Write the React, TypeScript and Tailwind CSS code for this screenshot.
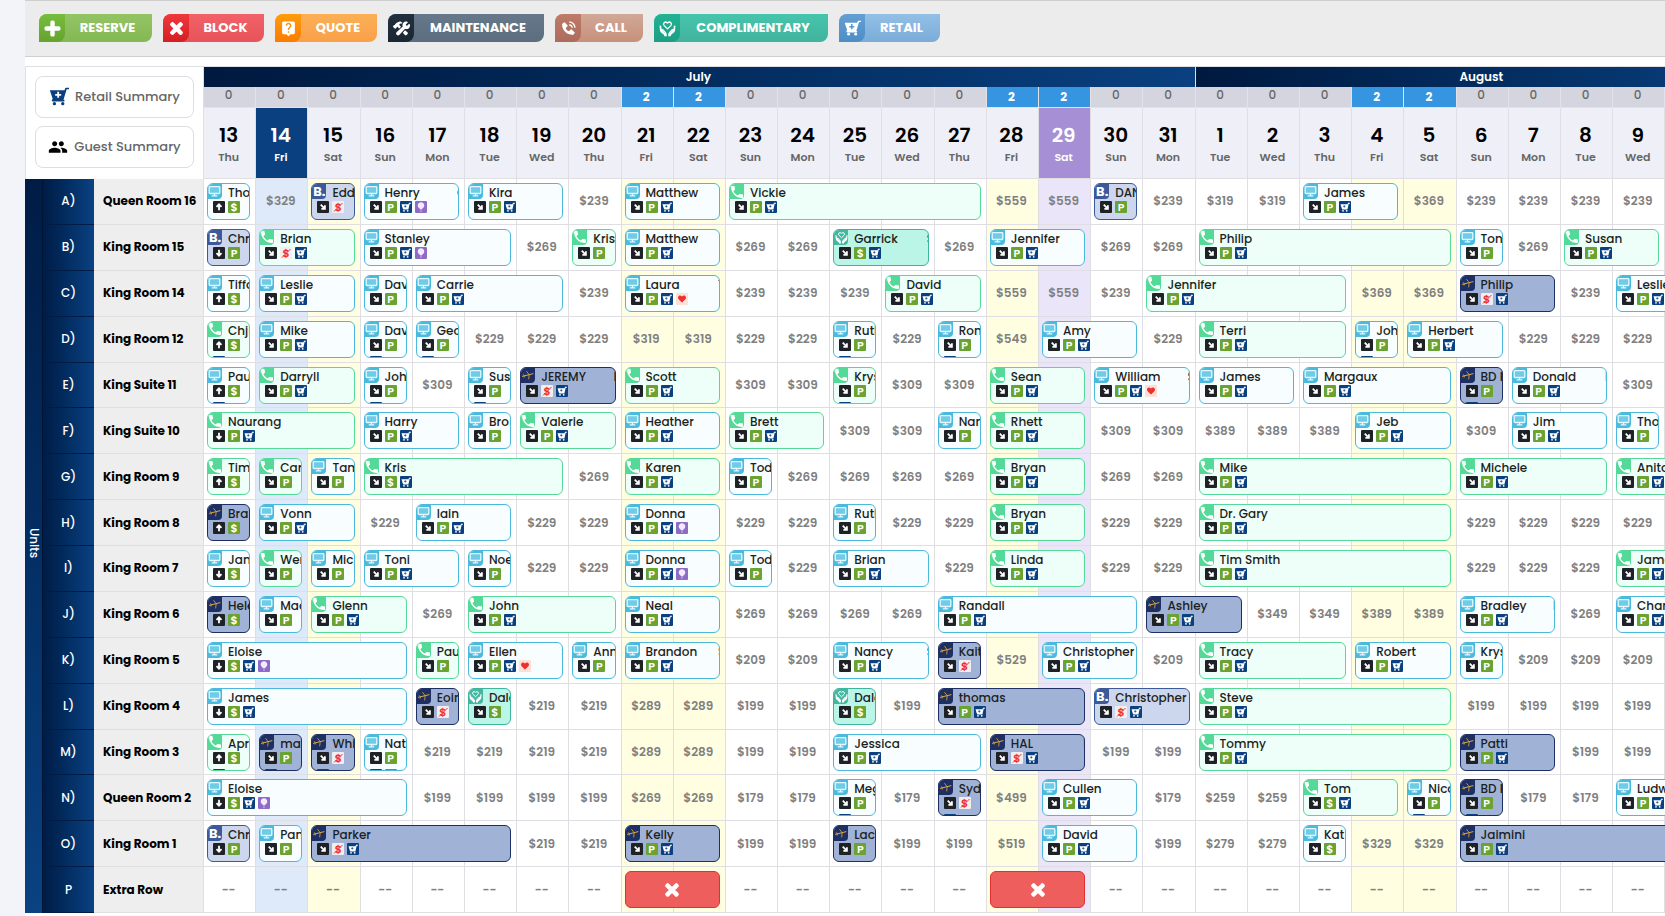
import type { ComponentType, ReactNode } from "react";
import { FaHeart, FaPlus, FaTimes } from "react-icons/fa";
import { IoConstruct } from "react-icons/io5";
import { MdLiveHelp, MdPeople, MdPhone } from "react-icons/md";
import { BiSolidPhoneCall } from "react-icons/bi";

type IconProps = { className?: string };

/* ---------- icons ---------- */

function CartIcon({ className }: IconProps) {
  return (
    <svg viewBox="0 0 24 24" className={className} fill="currentColor" aria-hidden="true">
      <path
        fillRule="evenodd"
        d="M1 4h17.600l.7-2.200c.2-.6.6-.9 1.200-.9H24v1.900h-2.800L17.400 15.400H18.500V17.500H4.500c-1 0-1.500-1-1-1.800l.9-1.500L1 4Zm8.900 1.800v2.500H7.400v2.200h2.500V13h2.200v-2.500h2.500V8.300h-2.500V5.800H9.900Z"
      />
      <circle cx="6.500" cy="20" r="2" />
      <circle cx="16.500" cy="20" r="2" />
    </svg>
  );
}

function SmallCartIcon({ className }: IconProps) {
  return (
    <svg viewBox="0 0 12 12" className={className} fill="currentColor" aria-hidden="true">
      <path d="M1.500 3.200h7l.5-1.400h1.900v.9H9.700L8.400 8.400H3.400L2.700 7.200Z" />
      <circle cx="4" cy="9.800" r="0.9" />
      <circle cx="7.700" cy="9.800" r="0.9" />
      <path d="M5.300 4.200v2.400M4.100 5.400h2.400" stroke="#0a4080" strokeWidth="0.7" />
    </svg>
  );
}

function CareIcon({ className }: IconProps) {
  return (
    <svg viewBox="0 0 24 24" className={className} fill="none" stroke="currentColor" aria-hidden="true">
      <path
        strokeWidth="1.800"
        strokeLinejoin="round"
        d="M12 12.500 7.300 7.900a2.900 2.900 0 0 1 4.100-4.100l.6.600.6-.6a2.900 2.900 0 0 1 4.100 4.100L12 12.500Z"
      />
      <path
        fill="currentColor"
        stroke="none"
        d="M.8 8.500c0-.9 2-.9 2.200.100l.7 4.400c1.200-.9 2.200-.300 3 .7l3 3.600c1 1.300 1.300 2.200 1.300 5.700H7.500c-.2-1.600-.8-2.500-2.300-3.500C2 17.500 1.400 16 1.200 13L.8 8.500ZM23.200 8.500c0-.9-2-.9-2.200.100l-.7 4.400c-1.200-.9-2.200-.300-3 .7l-3 3.600c-1 1.300-1.300 2.200-1.300 5.700h3.500c.2-1.600.8-2.500 2.300-3.500 3.200-2 3.800-3.500 4-6.500l.4-4.500Z"
      />
      <path strokeWidth="1" className="stroke-black/20" d="m5 14.500 3.500 4M19 14.500l-3.500 4" />
    </svg>
  );
}

function MonitorIcon({ className }: IconProps) {
  return (
    <svg viewBox="0 0 14 13" className={className} fill="none" stroke="#e6f8ff" aria-hidden="true">
      <rect x="1.200" y="1.700" width="10.600" height="6.800" rx="0.8" strokeWidth="1.300" fill="#6fcbe6" />
      <path d="M6.500 8.500v2M3.700 10.900h5.600" strokeWidth="1.300" />
    </svg>
  );
}

function PlaneIcon({ className }: IconProps) {
  return (
    <svg viewBox="0 0 14 13" className={className} fill="none" stroke="#e2aa3a" aria-hidden="true">
      <path d="M1.500 7.300 12 4.700" strokeWidth="1" strokeLinecap="round" />
      <path d="m5.700 2.500 2.500 3.200-.5 4.300M2.500 5.700l.9 1.300-.3 1.200" strokeWidth="0.8" strokeLinecap="round" />
    </svg>
  );
}

function ArrowIcon({ turn }: { turn: string }) {
  return (
    <svg viewBox="0 0 12 12" className={`size-3 ${turn}`} fill="none" stroke="#fff" strokeWidth="1.800" aria-hidden="true">
      <path d="M6 2.800V9M3.500 6.200 6 8.700l2.500-2.500" />
    </svg>
  );
}

function BalloonIcon() {
  return (
    <svg viewBox="0 0 12 12" className="size-3" fill="#f4eaff" aria-hidden="true">
      <path d="M6 1.300c2 0 3.300 1.500 3.300 3.200C9.300 6.200 7.600 7.600 6.300 8.300h-.6C4.400 7.600 2.700 6.200 2.700 4.500 2.700 2.800 4 1.300 6 1.300ZM5.700 8.300h.6V11h-.6Z" />
    </svg>
  );
}

/* ---------- toolbar ---------- */

const ACTIONS: { label: string; Icon: ComponentType<IconProps>; body: string; cap: string; width: string; glyph: string }[] = [
  { label: "RESERVE", Icon: FaPlus, glyph: "stroke-white stroke-[36]", width: "w-[113px]", body: "from-[#93c464] to-[#84b854]", cap: "from-[#76bd3d] to-[#65a32e]" },
  { label: "BLOCK", Icon: FaTimes, glyph: "stroke-white stroke-[36]", width: "w-[101px]", body: "from-[#f26168] to-[#e6545a]", cap: "from-[#f0383c] to-[#d51d22]" },
  { label: "QUOTE", Icon: MdLiveHelp, glyph: "", width: "w-[102px]", body: "from-[#fbb055] to-[#f9a049]", cap: "from-[#ff9c0c] to-[#fb7b00]" },
  { label: "MAINTENANCE", Icon: IoConstruct, glyph: "", width: "w-[156px]", body: "from-[#66788a] to-[#5c6d7f]", cap: "from-[#22303f] to-[#1a2632]" },
  { label: "CALL", Icon: BiSolidPhoneCall, glyph: "", width: "w-[88px]", body: "from-[#d1a897] to-[#c7907a]", cap: "from-[#bf7a68] to-[#ac6c5c]" },
  { label: "COMPLIMENTARY", Icon: CareIcon, glyph: "", width: "w-[174px]", body: "from-[#46c5ac] to-[#42b39d]", cap: "from-[#22b394] to-[#1c9f84]" },
  { label: "RETAIL", Icon: CartIcon, glyph: "", width: "w-[101px]", body: "from-[#93bfe5] to-[#7aacd8]", cap: "from-[#649fd3] to-[#4d8dc6]" },
];

function Toolbar() {
  return (
    <div className="flex gap-[11px] border-y border-[#cfcfcf] bg-[#ececec] pt-[13px] pb-[14px] pl-[14px]">
      {ACTIONS.map(({ label, Icon, body, cap, width, glyph }) => (
        <button
          key={label}
          type="button"
          className={`flex h-7 shrink-0 overflow-hidden rounded-tl-lg rounded-br-lg bg-linear-to-b text-[13px] font-bold text-white ${width} ${body}`}
        >
          <span className={`flex h-7 w-[26px] items-center justify-center rounded-br-lg bg-linear-to-b ${cap}`}>
            <Icon className={`size-[17px] ${glyph}`} />
          </span>
          <span className="flex h-7 flex-1 items-center justify-center pr-[2px]">{label}</span>
        </button>
      ))}
    </div>
  );
}

/* ---------- schedule data ---------- */

const DAY_NAMES = ["Thu", "Fri", "Sat", "Sun", "Mon", "Tue", "Wed"];
const DAYS = Array.from({ length: 30 }, (_, i) => ({
  date: i < 19 ? 13 + i : i - 18,
  name: DAY_NAMES[i % 7],
}));
const BUSY = [8, 9, 15, 16, 22, 23];
const TODAY = 1;
const HOLIDAY = 16;
const WEEKEND = [2, 8, 9, 15, 22, 23];

/*
 * Each row is a list of entries separated by "|".
 * A rate is "239" or "239*4"; a stay is "<source><nights>/<guest>/<marks>/<surname initial>".
 */
const UNITS: [string, string, string][] = [
  ["A)", "Queen Room 16", "w1/Tho/u$|329|k1/Edd/nx|w2/Henry/nPcb/C|w2/Kira/nPc|239|w2/Matthew/nPc|p5/Vickie/nPc|559*2|k1/DAN/nP|239|319*2|w2/James/nPc|369|239*4"],
  ["B)", "King Room 15", "k1/Chr/dP|p2/Brian/nxc|w3/Stanley/nPcb|269|p1/Kris/nP|w2/Matthew/nPc|269*2|g2/Garrick/n$c/S|269|w2/Jennifer/nPc|269*2|p5/Philip/nPc|w1/Ton/nP|269|p2/Susan/nPc"],
  ["C)", "King Room 14", "w1/Tiffa/u$|w2/Leslie/nPc|w1/Dav/nP|w3/Carrie/nPc|239|w2/Laura/nPch/T|239*3|p2/David/nPc|559*2|239|p4/Jennifer/nPc|369*2|e2/Philip/nxc|239|w2/Leslie/nPc"],
  ["D)", "King Room 12", "p1/Chji/u$c|w2/Mike/nPc|w1/Dav/nPc|w1/Geo/nPc|229*3|319*2|229*2|w1/Ruth/nPc|229|w1/Ron/nPc|549|w2/Amy/nPc|229|p3/Terri/nPc|w1/Joh/nPc|w2/Herbert/nPc|229*3"],
  ["E)", "King Suite 11", "w1/Pau/u$c|p2/Darryll/nPc|w1/Joh/nPc|309|w1/Sus/nPc|e2/JEREMY/nxc/B|p2/Scott/nPc|309*2|p1/Krys/nPc|309*2|p2/Sean/nPc|w2/William/nPch/S|w2/James/nPc|w3/Margaux/nPc|e1/BD F/nPc|w2/Donald/nPc/B|309"],
  ["F)", "King Suite 10", "p3/Naurang/dPc|w2/Harry/nPc|w1/Bro/nP|p2/Valerie/nPc|w2/Heather/nPc|p2/Brett/nPc|309*2|w1/Nan/nP|p2/Rhett/nPc|309*2|389*3|w2/Jeb/nPc|309|w2/Jim/nPc|w1/Tho/nP"],
  ["G)", "King Room 9", "p1/Tim/u$|p1/Car/nP|w1/Tam/nP|p4/Kris/n$c|269|p2/Karen/nPc|w1/Tod/nP|269*4|p2/Bryan/nPc|269*2|p5/Mike/nPc|p3/Michele/nPc|p2/Anita/nPc"],
  ["H)", "King Room 8", "e1/Bra/u$|w2/Vonn/nPc|229|w2/Iain/nPc|229*2|w2/Donna/nPcb|229*2|w1/Ruth/nP|229*2|p2/Bryan/nPc|229*2|p5/Dr. Gary/nPc|229*4"],
  ["I)", "King Room 7", "w1/Jan/d$|p1/Wen/nP|w1/Mic/nP|w2/Toni/nPc|w1/Noe/nP|229*2|w2/Donna/nPcb|w1/Tod/nP|229|w2/Brian/nPc|229|p2/Linda/nPc|229*2|p5/Tim Smith/nPc|229*3|p2/James/nPc"],
  ["J)", "King Room 6", "e1/Hele/u$|w1/Mac/nP|p2/Glenn/nPc|269|p3/John/nPc|w2/Neal/nPc|269*4|w4/Randall/nPc|e2/Ashley/nPc|349*2|389*2|w2/Bradley/nPc/M|269|w2/Charles/nPc"],
  ["K)", "King Room 5", "w4/Eloise/d$cb|p1/Pau/nP|w2/Ellen/nPch/S|w1/Ann/nP|w2/Brandon/nPc/S|209*2|w2/Nancy/nPc/S|e1/Kait/nx|529|w2/Christopher/nPc|209|p3/Tracy/nPc|w2/Robert/nPc|w1/Krys/nP|209*3"],
  ["L)", "King Room 4", "w4/James/d$c|e1/Eoin/nx|g1/Dale/n$|219*2|289*2|199*2|g1/Dale/n$|199|e3/thomas/nPc|k2/Christopher/nxc|p5/Steve/nPc|199*4"],
  ["M)", "King Room 3", "p1/Apr/u$c|e1/mat/nPc|e1/Whi/nxc|w1/Nat/nPcb|219*4|289*2|199*2|w3/Jessica/nPc|e2/HAL/nxc/B|199*2|p5/Tommy/nPc|e2/Patti/nPc|199*2"],
  ["N)", "Queen Room 2", "w4/Eloise/d$cb|199*4|269*2|179*2|w1/Meg/nPc|179|e1/Syd/nxc|499|w2/Cullen/nPc|179|259*2|p2/Tom/n$c|w1/Nico/nPc|e1/BD F/nPc|179*2|w2/Ludwig/nPc"],
  ["O)", "King Room 1", "k1/Chr/dP|w1/Pam/nP|e4/Parker/nxc|219*2|e2/Kelly/nPc|199*2|e1/Lac/nP|199*2|519|w2/David/nPc|199|279*2|w1/Kat/n$|329*2|e5/Jaimini/nPc"],
  ["P", "Extra Row", "-*8|X2|-*5|X2|-*11"],
];

type Entry = { kind: "rate" | "stay" | "block" | "none"; source: string; span: number; text: string; marks: string; tail: string };

function parseRow(row: string): Entry[] {
  const cells: Entry[] = [];
  const push = (kind: Entry["kind"], span = 1, text = "", source = "", marks = "", tail = "") =>
    cells.push({ kind, span, text, source, marks, tail });
  for (const item of row.split("|")) {
    if (/^[\d-]/.test(item)) {
      const [value, times = "1"] = item.split("*");
      for (let i = 0; i < Number(times); i++) push("rate", 1, value === "-" ? "--" : `$${value}`);
    } else {
      const [head, name = "", marks = "", tail = ""] = item.split("/");
      const span = Number(head.slice(1));
      push(head[0] === "X" ? "block" : "stay", span, name, head[0], marks, tail);
      for (let i = 1; i < span; i++) push("none");
    }
  }
  while (cells.length < DAYS.length) push("none");
  return cells.slice(0, DAYS.length);
}

const SOURCES: Record<string, { card: string; badge: string; icon: ReactNode }> = {
  w: { card: "border-[#4bb9dc] bg-[#f8fdff]", badge: "bg-[#4bbbdd]", icon: <MonitorIcon className="h-[13px] w-[14px]" /> },
  p: { card: "border-[#55d998] bg-[#edfff8]", badge: "bg-[#55d998]", icon: <MdPhone className="size-4 shrink-0 text-white" /> },
  k: { card: "border-[#3c5a99] bg-[#ccd7ee]", badge: "bg-[#3c5a9b]", icon: <span className="text-[13px] leading-none font-bold text-white">B.</span> },
  e: { card: "border-[#1d2f63] bg-[#a1b2d7]", badge: "bg-[#1d2f63]", icon: <PlaneIcon className="h-[13px] w-[14px]" /> },
  g: { card: "border-[#3cb59c] bg-[#bbf5e8]", badge: "bg-[#45b7a0]", icon: <CareIcon className="size-[13px] text-white" /> },
};

const MARKS: Record<string, { box: string; icon: ReactNode }> = {
  n: { box: "bg-[#1e2226]", icon: <ArrowIcon turn="-rotate-45" /> },
  u: { box: "bg-[#1e2226]", icon: <ArrowIcon turn="rotate-180" /> },
  d: { box: "bg-[#1e2226]", icon: <ArrowIcon turn="rotate-0" /> },
  P: { box: "bg-[#6aa331] text-white", icon: "P" },
  $: { box: "bg-[#6aa331] text-white", icon: "$" },
  x: {
    box: "bg-[#f0eeee] text-[#f03030] relative",
    icon: (
      <>
        $
        <svg viewBox="0 0 12 12" className="absolute inset-0 size-3" aria-hidden="true">
          <path d="M2 10.500 10.500 2" stroke="#f03030" strokeWidth="1" />
        </svg>
      </>
    ),
  },
  c: { box: "bg-[#0a4080] text-white", icon: <SmallCartIcon className="size-3" /> },
  b: { box: "bg-[#8e6bc4]", icon: <BalloonIcon /> },
  h: { box: "bg-[#fde0d6] text-[#f03030]", icon: <FaHeart className="size-2" /> },
};

/* ---------- calendar ---------- */

function Stay({ entry }: { entry: Entry }) {
  const source = SOURCES[entry.source];
  return (
    <button
      type="button"
      style={{ width: `calc(${entry.span} * (100% + 4px) - 9px)` }}
      className={`relative z-10 flex h-[37px] flex-col overflow-hidden rounded-md border text-left ${source.card}`}
    >
      <span className="flex h-[17px] w-full shrink-0 items-start">
        <span className={`flex h-[15px] w-[14px] shrink-0 items-center justify-center rounded-br ${source.badge}`}>{source.icon}</span>
        <span className="flex-1 overflow-hidden pl-[6px] text-[12px] leading-[17px] font-medium whitespace-nowrap text-[#1b1f22]">
          {entry.text}
        </span>
        {entry.tail && <span className="w-[1px] overflow-hidden text-[12px] leading-[17px] text-[#1b1f22]">{entry.tail}</span>}
      </span>
      <span className="flex shrink-0 flex-wrap gap-x-[3px] gap-y-[5px] pl-[5px]">
        {[...entry.marks].map((mark) => (
          <span
            key={mark}
            className={`flex size-3 items-center justify-center rounded-[1px] text-[11px] leading-3 font-semibold ${MARKS[mark].box}`}
          >
            {MARKS[mark].icon}
          </span>
        ))}
      </span>
    </button>
  );
}

function Block({ span }: { span: number }) {
  return (
    <button
      type="button"
      aria-label="Blocked"
      style={{ width: `calc(${span} * (100% + 4px) - 9px)` }}
      className="relative z-10 flex h-[37px] items-center justify-center rounded-md border border-[#e0312f] bg-[#ee5e5c] text-white"
    >
      <FaTimes className="size-[18px] stroke-white stroke-[36]" />
    </button>
  );
}

function cellTint(i: number) {
  if (i === TODAY) return "bg-[#dee9fa]";
  if (i === HOLIDAY) return "bg-[#ebe5f9]";
  if (WEEKEND.includes(i)) return "bg-[#fffee0]";
  return "bg-white";
}

function dayTint(i: number) {
  if (i === TODAY) return "bg-[#0a4080] text-white";
  if (i === HOLIDAY) return "bg-[#a68fd4] text-white";
  return "bg-[#eeeff7] text-black";
}

function dayNameTint(i: number) {
  return i === TODAY || i === HOLIDAY ? "text-white" : "text-[#666]";
}

function SummaryButton({ icon, children }: { icon: ReactNode; children: ReactNode }) {
  return (
    <button
      type="button"
      className="flex h-[42px] w-full items-center justify-center gap-[6px] rounded-lg border border-[#dddde1] bg-white text-[13px] font-medium text-[#666]"
    >
      {icon}
      {children}
    </button>
  );
}

function Calendar() {
  return (
    <table className="w-full min-w-[1745px] flex-1 table-fixed border-separate border-spacing-0">
      <colgroup>
        <col className="w-[18px]" />
        <col className="w-[51px]" />
        <col className="w-[110px]" />
        {DAYS.map((_, i) => (
          <col key={i} />
        ))}
      </colgroup>
      <thead>
        <tr className="h-[21px]">
          <td colSpan={3} rowSpan={3} className="border border-b-0 border-[#dedee3] bg-white px-[9px] pb-[3px] align-middle">
            <div className="flex flex-col gap-2">
              <SummaryButton icon={<CartIcon className="size-5 text-[#0a4080]" />}>Retail Summary</SummaryButton>
              <SummaryButton icon={<MdPeople className="size-5 text-black" />}>Guest Summary</SummaryButton>
            </div>
          </td>
          {[
            { name: "July", span: 19 },
            { name: "August", span: 11 },
          ].map((month) => (
            <th
              key={month.name}
              colSpan={month.span}
              className="border-t border-r border-[#dedee3] bg-linear-to-r from-[#00193f] to-[#0a4080] pr-[2px] text-[12px] leading-4 font-semibold text-white"
            >
              {month.name}
            </th>
          ))}
        </tr>
        <tr className="h-[21px]">
          {DAYS.map((_, i) =>
            BUSY.includes(i) ? (
              <td key={i} className="border-r border-b border-[#e2e2e8] bg-[#3595e0] pr-[2px] text-center text-[12px] leading-4 font-bold text-white">
                2
              </td>
            ) : (
              <td key={i} className="border-r border-b border-[#e2e2e8] bg-[#d4d5de] pr-[2px] pb-1 text-center text-[12px] leading-4 font-medium text-[#666]">
                0
              </td>
            ),
          )}
        </tr>
        <tr className="h-[71px]">
          {DAYS.map((day, i) => (
            <th key={i} className={`border-r border-b border-[#dedee3] pt-1 pr-[2px] text-center ${dayTint(i)}`}>
              <div className="text-[20px] leading-6 font-semibold">{day.date}</div>
              <div className={`text-[11px] leading-5 font-semibold ${dayNameTint(i)}`}>{day.name}</div>
            </th>
          ))}
        </tr>
      </thead>
      <tbody>
        {UNITS.map(([letter, name, row], r) => (
          <tr key={letter}>
            {r === 0 && (
              <th
                rowSpan={UNITS.length}
                className="border-r border-[#001536] bg-linear-to-b from-[#001c46] to-[#0a4282] text-center text-[12px] font-medium text-white"
              >
                <span className="inline-block [writing-mode:vertical-rl]">Units</span>
              </th>
            )}
            <th className="border-b border-[#001c46] bg-linear-to-r from-[#001c46] to-[#0a4282] text-[12px] font-medium text-white">{letter}</th>
            <th className="border-r border-b border-[#dedee3] bg-[#eee] pl-[9px] text-left text-[12px] font-bold whitespace-nowrap text-black">
              {name}
            </th>
            {parseRow(row).map((entry, i) =>
              entry.kind === "stay" || entry.kind === "block" ? (
                <td key={i} className={`border-r border-b border-[#dedee3] pt-1 pb-[3px] pl-[3px] align-top ${cellTint(i)}`}>
                  {entry.kind === "stay" ? <Stay entry={entry} /> : <Block span={entry.span} />}
                </td>
              ) : (
                <td key={i} className={`border-r border-b border-[#dedee3] pr-[2px] text-center text-[12px] font-semibold text-[#808080] ${cellTint(i)}`}>
                  {entry.text}
                </td>
              ),
            )}
          </tr>
        ))}
      </tbody>
    </table>
  );
}

export default function App() {
  return (
    <div className="flex min-h-screen flex-col bg-[#f3f4f9] pl-[25px] font-['Poppins','Inter',sans-serif]">
      <Toolbar />
      <main className="flex flex-1 flex-col overflow-x-auto bg-white pt-[9px] pb-[3px] [scrollbar-width:none]">
        <Calendar />
      </main>
    </div>
  );
}
